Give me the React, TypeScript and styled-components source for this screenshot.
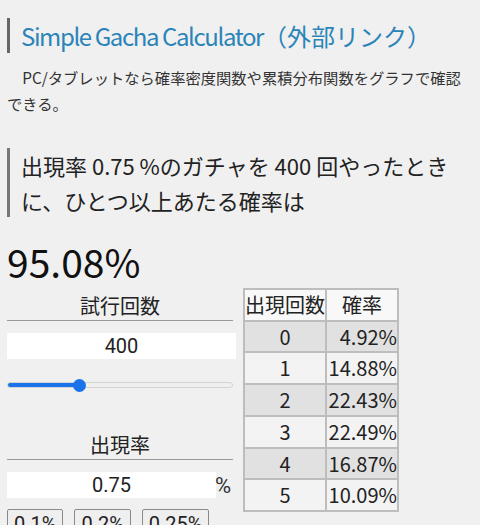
import React, { useState } from 'react';
import styled, { createGlobalStyle } from 'styled-components';

const GlobalStyle = createGlobalStyle`
  html, body {
    margin: 0;
    padding: 0;
    background: #f0f0f0;
  }
  body {
    font-family: "Noto Sans CJK JP", "Noto Sans", sans-serif;
    color: #333;
  }
`;

const Page = styled.div`
  width: 466px;
  padding: 18px 7px 0;
`;

const LinkTitle = styled.h3`
  margin: 0;
  padding-left: 11px;
  border-left: 3px solid #666;
  font-size: 24px;
  font-weight: 400;
  line-height: 35px;
  color: #2a84b8;
`;

const Latin = styled.span`
  letter-spacing: -1.4px;
`;

const Lead = styled.p`
  margin: 11px 4px 0 0;
  font-size: 15.3px;
  line-height: 26px;
  color: #333;
`;

const Question = styled.h2`
  margin: 32px 0 0;
  padding-left: 11px;
  border-left: 3px solid #777;
  font-size: 22px;
  font-weight: 400;
  line-height: 34.5px;
  color: #222;
`;

const Result = styled.div`
  margin-top: 18px;
  font-size: 39px;
  line-height: 53px;
  color: #111;
`;

const Body = styled.div`
  display: flex;
  align-items: flex-start;
  gap: 7px;
`;

const Controls = styled.div`
  width: 229px;
  display: flex;
  flex-direction: column;
`;

const FieldLabel = styled.div<{ $gap: number }>`
  margin-top: ${({ $gap }) => $gap}px;
  width: 226px;
  padding-top: 4px;
  border-bottom: 1px solid #999;
  font-size: 20px;
  line-height: 28px;
  text-align: center;
  color: #222;
`;

const InputRow = styled.div`
  margin-top: 12px;
  display: flex;
  align-items: center;
`;

const NumberBox = styled.input<{ $width: number }>`
  width: ${({ $width }) => $width}px;
  height: 26px;
  box-sizing: border-box;
  border: none;
  outline: none;
  padding: 0;
  background: #fff;
  font-family: Roboto, "Noto Sans", sans-serif;
  font-size: 20px;
  color: #222;
  text-align: center;
`;

const Unit = styled.span`
  margin-left: -1px;
  font-family: Roboto, "Noto Sans", sans-serif;
  font-size: 22px;
  color: #333;
`;

const Range = styled.input`
  -webkit-appearance: none;
  appearance: none;
  margin: 18px 0 0;
  padding: 0;
  width: 226px;
  height: 16px;
  background: transparent;

  &::-webkit-slider-runnable-track {
    height: 6px;
    border-radius: 3px;
    border: 1px solid #d4d4d4;
    background: var(--fill);
  }
  &::-webkit-slider-thumb {
    -webkit-appearance: none;
    width: 13px;
    height: 13px;
    margin-top: -4.5px;
    border-radius: 50%;
    background: #1a73e8;
    border: none;
  }
`;

const Presets = styled.div`
  margin-top: 11px;
  display: flex;
  gap: 11px;
`;

const Preset = styled.button`
  padding: 1px 6px;
  border: 1px solid #8a8a8a;
  border-radius: 2px;
  background: #efefef;
  font-family: Roboto, "Noto Sans", sans-serif;
  font-size: 20px;
  line-height: 26px;
  color: #222;
`;

const Table = styled.table`
  border-collapse: collapse;
  font-size: 20px;
  color: #222;
`;

const Cell = styled.td<{ $right?: boolean; $w: number }>`
  width: ${({ $w }) => $w}px;
  padding: 0;
  border: 2px solid #bdbdbd;
  line-height: 29.7px;
  white-space: nowrap;
  text-align: ${({ $right }) => ($right ? 'right' : 'center')};
`;

const Row = styled.tr<{ $shade: boolean; $head?: boolean }>`
  background: ${({ $shade, $head }) =>
    $head ? '#f8f8f8' : $shade ? '#e1e1e1' : '#f3f3f3'};
`;

const rows = [
  ['0', '4.92%'],
  ['1', '14.88%'],
  ['2', '22.43%'],
  ['3', '22.49%'],
  ['4', '16.87%'],
  ['5', '10.09%'],
];

const App = () => {
  const [count, setCount] = useState(400);
  const [rate, setRate] = useState('0.75');
  const max = 1300;
  const pct = (count / max) * 100;
  const fill = `linear-gradient(to right, #1a73e8 0%, #1a73e8 ${pct}%, #efefef ${pct}%, #efefef 100%)`;

  return (
    <Page>
      <GlobalStyle />
      <LinkTitle>
        <Latin>Simple Gacha Calculator</Latin>（外部リンク）
      </LinkTitle>
      <Lead>
        {'\u3000'}PC/タブレットなら確率密度関数や累積分布関数をグラフで確認できる。
      </Lead>
      <Question>
        出現率 0.75 %のガチャを 400 回やったときに、ひとつ以上あたる確率は
      </Question>
      <Result>95.08%</Result>
      <Body>
        <Controls>
          <FieldLabel $gap={0}>試行回数</FieldLabel>
          <InputRow>
            <NumberBox
              $width={229}
              value={count}
              onChange={(e) => setCount(Number(e.target.value) || 0)}
            />
          </InputRow>
          <Range
            type="range"
            min={0}
            max={max}
            value={count}
            onChange={(e) => setCount(Number(e.target.value))}
            style={{ ['--fill' as string]: fill } as React.CSSProperties}
          />
          <FieldLabel $gap={34}>出現率</FieldLabel>
          <InputRow>
            <NumberBox
              $width={209}
              value={rate}
              onChange={(e) => setRate(e.target.value)}
            />
            <Unit>%</Unit>
          </InputRow>
          <Presets>
            {['0.1%', '0.2%', '0.25%'].map((p) => (
              <Preset key={p} onClick={() => setRate(p.replace('%', ''))}>
                {p}
              </Preset>
            ))}
          </Presets>
        </Controls>
        <Table>
          <tbody>
            <Row $shade={false} $head>
              <Cell $w={80}>出現回数</Cell>
              <Cell $w={70}>確率</Cell>
            </Row>
            {rows.map(([n, p], i) => (
              <Row key={n} $shade={i % 2 === 0}>
                <Cell $w={80}>{n}</Cell>
                <Cell $w={70} $right>
                  {p}
                </Cell>
              </Row>
            ))}
          </tbody>
        </Table>
      </Body>
    </Page>
  );
};

export default App;
